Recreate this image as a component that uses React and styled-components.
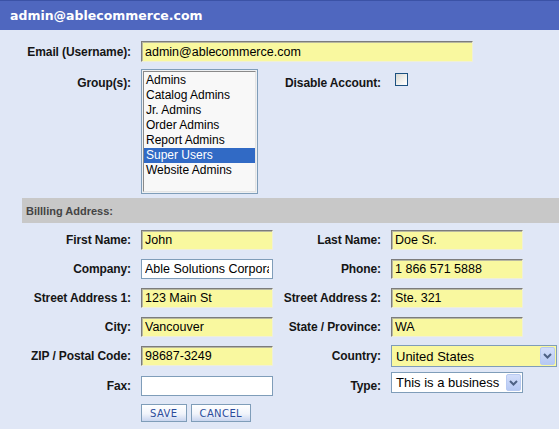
import styled, { createGlobalStyle } from "styled-components";

const GlobalStyle = createGlobalStyle`
  html, body {
    margin: 0;
    padding: 0;
    background: #E0E7F6;
  }
  body {
    font-family: "Liberation Sans", Arial, sans-serif;
  }
`;

const groups = [
    "Admins",
    "Catalog Admins",
    "Jr. Admins",
    "Order Admins",
    "Report Admins",
    "Super Users",
    "Website Admins",
];

export default function App() {
    return (
        <Page>
            <GlobalStyle />
            <Header>admin@ablecommerce.com</Header>
            <FormGrid top>
                <Label>Email (Username):</Label>
                <Input yellow wide defaultValue="admin@ablecommerce.com" />

                <Label topAligned>Group(s):</Label>
                <ListBox>
                    <ListInner>
                        {groups.map((g) => (
                            <ListItem key={g} selected={g === "Super Users"}>
                                {g}
                            </ListItem>
                        ))}
                    </ListInner>
                </ListBox>
                <Label topAligned>Disable Account:</Label>
                <CheckBox />
            </FormGrid>

            <SectionBar>Billling Address:</SectionBar>

            <FormGrid>
                <Label>First Name:</Label>
                <Input yellow defaultValue="John" />
                <Label>Last Name:</Label>
                <Input yellow defaultValue="Doe Sr." />

                <Label>Company:</Label>
                <Input defaultValue="Able Solutions Corporation" />
                <Label>Phone:</Label>
                <Input yellow defaultValue="1 866 571 5888" />

                <Label>Street Address 1:</Label>
                <Input yellow defaultValue="123 Main St" />
                <Label>Street Address 2:</Label>
                <Input yellow defaultValue="Ste. 321" />

                <Label>City:</Label>
                <Input yellow defaultValue="Vancouver" />
                <Label>State / Province:</Label>
                <Input yellow defaultValue="WA" />

                <Label>ZIP / Postal Code:</Label>
                <Input yellow defaultValue="98687-3249" />
                <Label>Country:</Label>
                <SelectBox yellow width={166}>
                    <SelectValue>United States</SelectValue>
                    <Arrow />
                </SelectBox>

                <Label>Fax:</Label>
                <Input />
                <Label>Type:</Label>
                <SelectBox width={132} raised>
                    <SelectValue>This is a business</SelectValue>
                    <Arrow />
                </SelectBox>

                <Buttons>
                    <Button>SAVE</Button>
                    <Button>CANCEL</Button>
                </Buttons>
            </FormGrid>
        </Page>
    );
}

function Arrow() {
    return (
        <ArrowButton>
            <svg width="9" height="6" viewBox="0 0 9 6">
                <path d="M1 1 L4.5 4.5 L8 1" fill="none" stroke="#4D6185" strokeWidth="2" />
            </svg>
        </ArrowButton>
    );
}

const Page = styled.div`
    width: 559px;
    height: 429px;
    overflow: hidden;
    background: #E0E7F6;
`;

const Header = styled.div`
    height: 30px;
    box-sizing: border-box;
    border-top: 1px solid #3B52A6;
    background: #4F67BF;
    color: #fff;
    display: flex;
    align-items: center;
    padding-left: 10px;
    font-family: "DejaVu Sans", Verdana, sans-serif;
    font-weight: 700;
    font-size: 12.5px;
`;

const FormGrid = styled.div`
    display: grid;
    grid-template-columns: 131px 132px 98px 1fr;
    column-gap: 10px;
    row-gap: ${(p) => (p.top ? "7px" : "9px")};
    align-items: center;
    padding-top: ${(p) => (p.top ? "11px" : "7px")};
`;

const Label = styled.div`
    text-align: right;
    font-weight: 700;
    font-size: 12px;
    letter-spacing: -0.1px;
    color: #151515;
    align-self: ${(p) => (p.topAligned ? "start" : "center")};
    margin-top: ${(p) => (p.topAligned ? "7px" : "0")};
`;

const Input = styled.input`
    box-sizing: border-box;
    width: ${(p) => (p.wide ? "332px" : "132px")};
    grid-column: ${(p) => (p.wide ? "2 / span 3" : "auto")};
    height: ${(p) => (p.wide ? "21px" : "20px")};
    margin: 0;
    padding: 0 3px;
    font-family: "Liberation Sans", Arial, sans-serif;
    font-size: 12.5px;
    color: #000;
    outline: none;
    background: ${(p) => (p.yellow ? "#F9F89F" : "#fff")};
    border: 1px solid;
    border-color: ${(p) =>
        p.yellow ? "#7C7C7C #EFEFD8 #EFEFD8 #7C7C7C" : "#7F9DB9"};
    box-shadow: ${(p) => (p.yellow ? "inset 1px 1px 0 #B8B8A0" : "none")};
`;

const ListBox = styled.div`
    box-sizing: border-box;
    width: 117px;
    height: 125px;
    border: 1px solid #7F9DB9;
    padding: 1px;
    background: #EEF0F2;
`;

const ListInner = styled.div`
    box-sizing: border-box;
    height: 100%;
    border: 1px solid;
    border-color: #8A8A8A #E4E4E4 #E4E4E4 #8A8A8A;
    background: #F8F8F8;
    padding-top: 1px;
`;

const ListItem = styled.div`
    height: 15px;
    line-height: 15px;
    padding-left: 2px;
    font-size: 12px;
    color: ${(p) => (p.selected ? "#fff" : "#000")};
    background: ${(p) => (p.selected ? "#316AC5" : "transparent")};
`;

const CheckBox = styled.div`
    align-self: start;
    margin-top: 4px;
    margin-left: 4px;
    width: 13px;
    height: 13px;
    box-sizing: border-box;
    border: 1px solid #1C5180;
    background: linear-gradient(135deg, #D8D8D2 0%, #F6F6F4 70%, #fff 100%);
`;

const SectionBar = styled.div`
    margin: 4px 0 0 22px;
    height: 25px;
    background: #C8C8C8;
    display: flex;
    align-items: center;
    padding-left: 4px;
    font-weight: 700;
    font-size: 11px;
    color: #444;
`;

const SelectBox = styled.div`
    box-sizing: border-box;
    width: ${(p) => p.width}px;
    height: ${(p) => (p.yellow ? "22px" : "21px")};
    margin: ${(p) => (p.raised ? "-3px 0 3px" : "-1px 0")};
    display: flex;
    align-items: center;
    border: 1px solid #7F9DB9;
    background: ${(p) => (p.yellow ? "#F9F89F" : "#fff")};
    padding: 1px;
`;

const SelectValue = styled.div`
    flex: 1;
    padding-left: 3px;
    font-size: 13px;
    white-space: nowrap;
    overflow: hidden;
`;

const ArrowButton = styled.div`
    width: 15px;
    height: 100%;
    box-sizing: border-box;
    border: 1px solid #B8CAF2;
    border-radius: 2px;
    background: linear-gradient(#D3DEFA, #B6C9F4);
    display: flex;
    align-items: center;
    justify-content: center;
`;

const Buttons = styled.div`
    grid-column: 2 / span 3;
    display: flex;
    gap: 4px;
    margin-top: -1px;
`;

const Button = styled.button`
    height: 18px;
    box-sizing: border-box;
    margin: 0;
    padding: 0 8px;
    border: 1px solid #7F9DB9;
    background: linear-gradient(#ffffff 0%, #F1F4FB 55%, #C9D5EF 100%);
    color: #2B4C9B;
    font-family: "DejaVu Sans", Verdana, sans-serif;
    font-size: 10px;
    letter-spacing: 0.4px;
    cursor: pointer;
`;
